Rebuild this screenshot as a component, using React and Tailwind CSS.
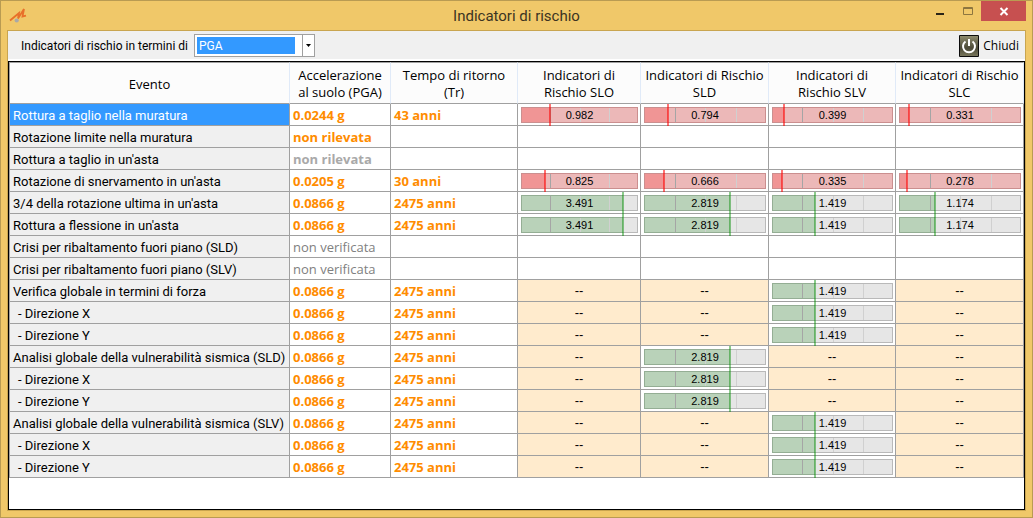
import { useState } from "react";

const NR = "--";
const ORANGE = "font-bold text-[#ff8c00]";
const SILVER = "font-bold text-[#a9a9a9]";
const GRAY = "text-[#808080]";

const columns = [
  { lines: ["Evento"], width: "w-[281px]" },
  { lines: ["Accelerazione", "al suolo (PGA)"], width: "w-[101px]" },
  { lines: ["Tempo di ritorno", "(Tr)"], width: "w-[127px]" },
  { lines: ["Indicatori di", "Rischio SLO"], width: "w-[123px]" },
  { lines: ["Indicatori di Rischio", "SLD"], width: "w-[128px]" },
  { lines: ["Indicatori di", "Rischio SLV"], width: "w-[127px]" },
  { lines: ["Indicatori di Rischio", "SLC"], width: "w-[128px]" },
];

const none = ["", "", "", ""];
const onlySLV = [NR, NR, "1.419", NR];
const onlySLD = [NR, "2.819", NR, NR];
const full = ["3.491", "2.819", "1.419", "1.174"];

const rows = [
  { name: "Rottura a taglio nella muratura", pga: "0.0244 g", tr: "43 anni", values: ["0.982", "0.794", "0.399", "0.331"] },
  { name: "Rotazione limite nella muratura", pga: "non rilevata", tr: "", values: none },
  { name: "Rottura a taglio in un'asta", pga: "non rilevata", tr: "", values: none, style: SILVER },
  { name: "Rotazione di snervamento in un'asta", pga: "0.0205 g", tr: "30 anni", values: ["0.825", "0.666", "0.335", "0.278"] },
  { name: "3/4 della rotazione ultima in un'asta", pga: "0.0866 g", tr: "2475 anni", values: full },
  { name: "Rottura a flessione in un'asta", pga: "0.0866 g", tr: "2475 anni", values: full },
  { name: "Crisi per ribaltamento fuori piano (SLD)", pga: "non verificata", tr: "", values: none, style: GRAY },
  { name: "Crisi per ribaltamento fuori piano (SLV)", pga: "non verificata", tr: "", values: none, style: GRAY },
  { name: "Verifica globale in termini di forza", pga: "0.0866 g", tr: "2475 anni", values: onlySLV },
  { name: "- Direzione X", sub: true, pga: "0.0866 g", tr: "2475 anni", values: onlySLV },
  { name: "- Direzione Y", sub: true, pga: "0.0866 g", tr: "2475 anni", values: onlySLV },
  { name: "Analisi globale della vulnerabilità sismica (SLD)", pga: "0.0866 g", tr: "2475 anni", values: onlySLD },
  { name: "- Direzione X", sub: true, pga: "0.0866 g", tr: "2475 anni", values: onlySLD },
  { name: "- Direzione Y", sub: true, pga: "0.0866 g", tr: "2475 anni", values: onlySLD },
  { name: "Analisi globale della vulnerabilità sismica (SLV)", pga: "0.0866 g", tr: "2475 anni", values: onlySLV },
  { name: "- Direzione X", sub: true, pga: "0.0866 g", tr: "2475 anni", values: onlySLV },
  { name: "- Direzione Y", sub: true, pga: "0.0866 g", tr: "2475 anni", values: onlySLV },
];

// the bar goes from 0 to 4, with a tick on every unit
function Meter({ value }) {
  const ok = Number(value) >= 1;
  const end = `round(${(Number(value) / 4) * 100}%, 1px)`;

  return (
    <div className={`relative h-4 ${ok ? "bg-[#e6e6e6]" : "bg-[#ecb8b8]"}`}>
      <div className={`absolute inset-y-0 left-0 ${ok ? "bg-[#b9d2b9]" : "bg-[#f09595]"}`} style={{ width: end }} />
      <div className="absolute inset-y-0 left-1/4 w-px bg-[#a5a5a5]" />
      <div className="absolute inset-y-0 left-1/2 w-px bg-[#d0d0d0]" />
      <div className="absolute inset-y-0 left-3/4 w-px bg-[#d0d0d0]" />
      <div className={`absolute inset-0 border ${ok ? "border-[#b9b9b9]" : "border-[#cb8f8f]"}`} />
      {ok && <div className="absolute inset-y-0 left-0 border border-r-0 border-[#94ae94]" style={{ width: end }} />}
      <span className="relative block text-center leading-4">{value}</span>
      <div
        className={`absolute -top-[3px] -ml-px h-[22px] w-0.5 ${ok ? "bg-[#008c00]/45" : "bg-[#ff0000]/55"}`}
        style={{ left: end }}
      />
    </div>
  );
}

function ValueCell({ value }) {
  if (value === "") return <td className="border-r border-b border-[#a0a0a0]" />;
  if (value === NR) {
    return <td className="border-r border-b border-[#a0a0a0] bg-[#ffebcd] p-0 text-center text-[13px]">{NR}</td>;
  }
  return (
    <td className="border-r border-b border-[#a0a0a0] pt-[3px] pr-0.5 pb-0.5 pl-[3px]">
      <Meter value={value} />
    </td>
  );
}

function TitleBar() {
  return (
    <header className="grid h-[29px] grid-cols-[1fr_auto_1fr] text-[#3c3422]">
      <svg className="mt-[6px] ml-0.5 h-4 w-[18px]" viewBox="0 0 18 16" fill="none">
        <path d="M1 13.500L10 6 9 11.500 15 2l-1.500 7.500 3.500-.8" stroke="#e8702a" strokeWidth="1.800" />
        <circle cx="7.700" cy="13.500" r="2.100" fill="#a9a9a9" />
      </svg>
      <h1 className="font-[Roboto,sans-serif] text-[15px] leading-[30px]">Indicatori di rischio</h1>
      <div className="flex items-start justify-end">
        <button aria-label="Riduci" className="flex h-5 w-[26px] items-center justify-center">
          <svg className="h-5 w-4" viewBox="0 0 16 20"><path d="M3 12h8v2H3z" fill="#2a2417" /></svg>
        </button>
        <button aria-label="Ingrandisci" className="flex h-5 w-[27px] items-center justify-center">
          <svg className="h-5 w-4" viewBox="0 0 16 20"><path d="M3.500 6.500h9v7h-9zM3 7.500h10" fill="none" stroke="#8d763f" /></svg>
        </button>
        <button aria-label="Chiudi finestra" className="flex h-5 w-[45px] items-center justify-center bg-[#c75050]">
          <svg className="h-5 w-4" viewBox="0 0 16 20"><path d="M4.500 7l7 7M11.500 7l-7 7" stroke="#fff" strokeWidth="2" /></svg>
        </button>
      </div>
    </header>
  );
}

export default function App() {
  const [unit, setUnit] = useState("PGA");
  const [selected, setSelected] = useState(0);

  return (
    <div className="flex min-h-screen flex-col border border-[#b99b52] bg-[#f0c869] px-[6px] pb-[6px] font-['Open_Sans','Noto_Sans',sans-serif] text-[13px] text-black">
      <TitleBar />

      <main className="flex flex-1 flex-col border border-[#c9a550] bg-white">
        <div className="flex h-7 items-center justify-between bg-[#f0f0f0] pt-px pr-[6px] pl-[13px] font-[Roboto,sans-serif]">
          <div className="flex items-center gap-[6px]">
            <label htmlFor="unit" className="text-[12px]">Indicatori di rischio in termini di</label>
            <div className="relative flex h-[23px] w-[121px] border border-[#a0a0a0] bg-white">
              <select
                id="unit"
                value={unit}
                onChange={(e) => setUnit(e.target.value)}
                className="my-0.5 ml-0.5 w-[98px] appearance-none bg-[#3399ff] pl-0.5 text-[12px] leading-4 text-white"
              >
                <option>PGA</option>
                <option>Tr</option>
              </select>
              <span className="pointer-events-none ml-auto flex w-3 items-center justify-center border-l border-[#a0a0a0]">
                <svg className="h-[3px] w-[5px]" viewBox="0 0 5 3"><path d="M0 0h5L2.500 3z" fill="#000" /></svg>
              </span>
            </div>
          </div>
          <button className="flex items-center gap-1 font-['Open_Sans','Noto_Sans',sans-serif] text-[12px]">
            <svg className="h-[22px] w-5" viewBox="0 0 20 22" fill="none">
              <defs>
                <linearGradient id="metal" x1="0" y1="0" x2="0" y2="1">
                  <stop offset="0" stopColor="#8c8a6e" />
                  <stop offset="0.6" stopColor="#4c4a38" />
                  <stop offset="1" stopColor="#77755a" />
                </linearGradient>
              </defs>
              <rect width="20" height="22" rx="1" fill="#0c0c0c" />
              <rect x="1" y="1" width="18" height="20" fill="url(#metal)" />
              <path d="M6.500 6.500a6 6 0 1 0 7 0" stroke="#fff" strokeWidth="2" />
              <path d="M10 4v7" stroke="#fff" strokeWidth="2" />
            </svg>
            Chiudi
          </button>
        </div>

        <div className="mt-0.5 flex-1 border border-black">
          <table className="w-full table-fixed border-separate border-spacing-0">
            <thead>
              <tr className="h-[42px]">
                {columns.map((col, i) => (
                  <th
                    key={i}
                    scope="col"
                    className={`${col.width} border-t border-r border-b border-t-[#a0a0a0] border-r-[#e0eaf8] border-b-[#a0a0a0] bg-[#fcfcfc] p-0 pt-0.5 font-normal leading-[17px] whitespace-nowrap first:border-l first:border-l-[#a0a0a0]`}
                  >
                    {col.lines.map((line) => (
                      <div key={line}>{line}</div>
                    ))}
                  </th>
                ))}
              </tr>
            </thead>
            <tbody>
              {rows.map((row, i) => (
                <tr key={i} className="h-[22px] font-['Liberation_Sans',sans-serif] text-[11px] leading-4" onClick={() => setSelected(i)}>
                  <th
                    scope="row"
                    className={`border-r border-b border-l border-[#a0a0a0] p-0 pt-0.5 text-left font-[Roboto,sans-serif] text-[13px] font-normal whitespace-nowrap ${row.sub ? "pl-2" : "pl-[3px]"} ${selected === i ? "bg-[#3399ff] text-white" : "bg-[#f0f0f0]"}`}
                  >
                    {row.name}
                  </th>
                  <td className={`border-r border-b border-[#a0a0a0] p-0 pl-[3px] font-['Open_Sans','Noto_Sans',sans-serif] text-[13px] whitespace-nowrap ${row.style || ORANGE}`}>
                    {row.pga}
                  </td>
                  <td className={`border-r border-b border-[#a0a0a0] p-0 pl-[3px] font-['Open_Sans','Noto_Sans',sans-serif] text-[13px] whitespace-nowrap ${ORANGE}`}>
                    {row.tr}
                  </td>
                  {row.values.map((value, j) => (
                    <ValueCell key={j} value={value} />
                  ))}
                </tr>
              ))}
            </tbody>
          </table>
        </div>
      </main>
    </div>
  );
}
